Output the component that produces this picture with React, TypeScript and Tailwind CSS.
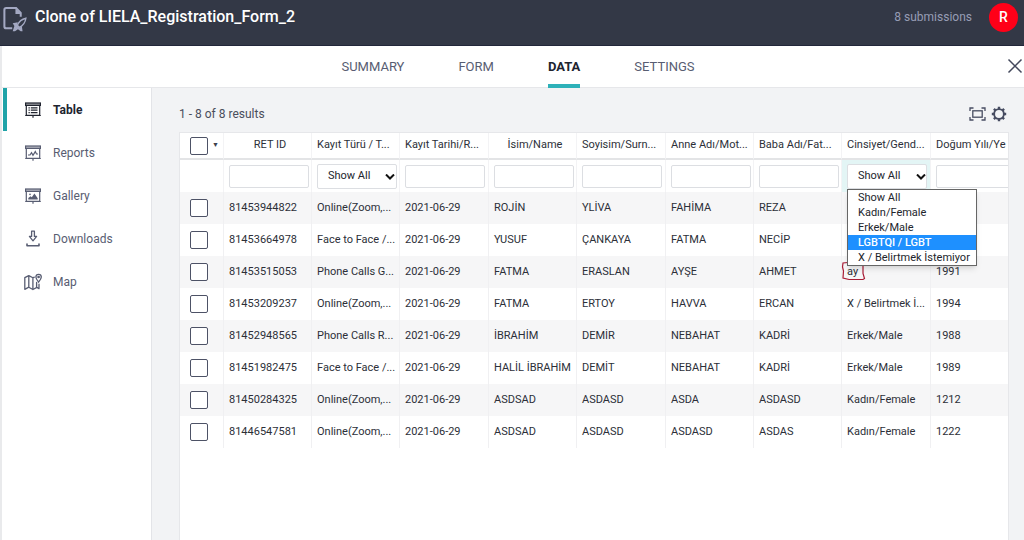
import type { ReactNode } from 'react'
import clsx from 'clsx'

const tabs = ['SUMMARY', 'FORM', 'DATA', 'SETTINGS']

const columns = [
  { title: 'RET ID', filter: 'text', width: 'w-[88px]', align: 'text-center' },
  { title: 'Kayıt Türü / T...', filter: 'select', width: 'w-[88px]', align: 'text-left' },
  { title: 'Kayıt Tarihi/R...', filter: 'text', width: 'w-[89px]', align: 'text-left' },
  { title: 'İsim/Name', filter: 'text', width: 'w-[88px]', align: 'text-center' },
  { title: 'Soyisim/Surn...', filter: 'text', width: 'w-[89px]', align: 'text-left' },
  { title: 'Anne Adı/Mot...', filter: 'text', width: 'w-[88px]', align: 'text-left' },
  { title: 'Baba Adı/Fat...', filter: 'text', width: 'w-[88px]', align: 'text-left' },
  { title: 'Cinsiyet/Gend...', filter: 'menu', width: 'w-[89px]', align: 'text-left' },
  { title: 'Doğum Yılı/Ye', filter: 'text', width: 'w-[88px]', align: 'text-left' },
]

const genders = ['Show All', 'Kadın/Female', 'Erkek/Male', 'LGBTQI / LGBT', 'X / Belirtmek İstemiyor']
const highlighted = 'LGBTQI / LGBT'

const rows = [
  ['81453944822', 'Online(Zoom,...', '2021-06-29', 'ROJİN', 'YLİVA', 'FAHİMA', 'REZA', '', ''],
  ['81453664978', 'Face to Face /...', '2021-06-29', 'YUSUF', 'ÇANKAYA', 'FATMA', 'NECİP', '', ''],
  ['81453515053', 'Phone Calls G...', '2021-06-29', 'FATMA', 'ERASLAN', 'AYŞE', 'AHMET', 'ay', '1991'],
  ['81453209237', 'Online(Zoom,...', '2021-06-29', 'FATMA', 'ERTOY', 'HAVVA', 'ERCAN', 'X / Belirtmek İ...', '1994'],
  ['81452948565', 'Phone Calls R...', '2021-06-29', 'İBRAHİM', 'DEMİR', 'NEBAHAT', 'KADRİ', 'Erkek/Male', '1988'],
  ['81451982475', 'Face to Face /...', '2021-06-29', 'HALİL İBRAHİM', 'DEMİT', 'NEBAHAT', 'KADRİ', 'Erkek/Male', '1989'],
  ['81450284325', 'Online(Zoom,...', '2021-06-29', 'ASDSAD', 'ASDASD', 'ASDA', 'ASDASD', 'Kadın/Female', '1212'],
  ['81446547581', 'Online(Zoom,...', '2021-06-29', 'ASDSAD', 'ASDASD', 'ASDASD', 'ASDAS', 'Kadın/Female', '1222'],
]

// presentation board shared by the Table, Reports and Gallery icons
function Board({ children }: { children: ReactNode }) {
  return (
    <svg viewBox="0 0 18 18" className="h-[18px] w-[18px]" fill="none" stroke="currentColor" strokeWidth="1.2">
      <rect x="1.6" y="2" width="14.8" height="2.4" fill="currentColor" fillOpacity="0.45" />
      <path d="M2.3 4.4v10h13.4v-10M1.2 14.5h15.6M9 14.5v2.3" />
      {children}
    </svg>
  )
}

const views = [
  {
    label: 'Table',
    icon: (
      <Board>
        <path d="M4.5 6.800h1.300M6.800 6.800h6.700M4.500 9.200h1.300M6.800 9.200h6.700M4.500 11.700h1.300M6.800 11.700h6.700" />
      </Board>
    ),
  },
  {
    label: 'Reports',
    icon: (
      <Board>
        <path d="M4 11h2l1.500-2.400L9 11.400l2.300-3.800 1.200 2.400H14" />
      </Board>
    ),
  },
  {
    label: 'Gallery',
    icon: (
      <Board>
        <path d="M4.300 12.600V11l2.200-1.800 1.300 1 2.600-3.600 3.300 4.600v1.400z" fill="currentColor" stroke="none" />
        <circle cx="6" cy="7.400" r="0.800" fill="currentColor" stroke="none" />
      </Board>
    ),
  },
  {
    label: 'Downloads',
    icon: (
      <svg viewBox="0 0 18 18" className="h-[18px] w-[18px]" fill="none" stroke="currentColor" strokeWidth="1.3" strokeLinejoin="round" strokeLinecap="round">
        <path d="M7.600 1.200h2.800v5.200h2.200L9 10.800 5.400 6.400h2.200z" />
        <path d="M3 14v1.800h12V14" strokeWidth="1.600" />
      </svg>
    ),
  },
  {
    label: 'Map',
    icon: (
      <svg viewBox="0 0 18 18" className="h-[18px] w-[18px]" fill="none" stroke="currentColor" strokeWidth="1.3" strokeLinejoin="round" strokeLinecap="round">
        <path d="M10.300 4.200 8.900 4.800 4.800 2.600.8 4.700v11.600l4-2.100 4.100 2.300 4-2.100 2.100 1.200v-4.400M4.800 2.600v11.600M8.900 4.800v11.700M12.600 9.400v5" />
        <path d="M14.600 9.200c-1.600-2-2.700-3.600-2.700-5.200a2.700 2.700 0 0 1 5.400 0c0 1.600-1.100 3.200-2.700 5.200z" />
        <circle cx="14.600" cy="4" r="0.700" />
      </svg>
    ),
  },
]

function FormLogo() {
  return (
    <svg viewBox="0 0 26 28" className="h-[26px] w-6 text-[#a3a8c2]" fill="none" stroke="currentColor" strokeWidth="2.2">
      <path d="M10 24H3.500Q1.500 24 1.500 22V4q0-2 2-2h10.700l5 5.500v4" />
      <path d="M13.500 2v6.500h6z" fill="currentColor" stroke="none" />
      <path d="M24.800 13.200c-3.800.9-7.500 3.500-9.300 7.600l2.300 2.200c4.200-1.900 6.400-5.600 7-9.800z" strokeWidth="1.500" />
      <path d="M16 17.500l-5.500 1.200 1.800 2.800-1.800 5.900h2.500l3.200-2.400 3 2.400h2l-.7-5 1.800-2.800-4.300 4-2.500-2.400z" fill="currentColor" stroke="none" />
    </svg>
  )
}

function Checkbox({ label }: { label: string }) {
  return (
    <input
      type="checkbox"
      aria-label={label}
      className="h-[18px] w-[18px] shrink-0 appearance-none rounded-xs border border-[#4d5266] bg-white"
    />
  )
}

function FilterSelect({ label }: { label: string }) {
  return (
    <div className="relative">
      <select
        aria-label={label}
        className="block h-[25px] w-20 appearance-none rounded-xs border border-[#dcdee2] bg-white pl-2.5 text-[11px] text-[#22252c]"
      >
        {genders.map(g => (
          <option key={g}>{g}</option>
        ))}
      </select>
      <svg viewBox="0 0 10 6" className="pointer-events-none absolute top-2.5 right-1 h-1.5 w-2.5" fill="none" stroke="#111" strokeWidth="2">
        <path d="M1 .5l4 4 4-4" />
      </svg>
    </div>
  )
}

function GenderMenu() {
  return (
    <ul
      role="listbox"
      aria-label="Cinsiyet/Gender"
      className="absolute top-full left-0 z-10 w-[130px] border border-[#666] bg-white text-left text-[11px] leading-[15px] font-normal text-[#22252c] shadow-md"
    >
      {genders.map(g => (
        <li
          key={g}
          role="option"
          aria-selected={g === highlighted}
          className={clsx('pl-2.5 whitespace-nowrap', g === highlighted && 'bg-[#1e90ff] font-medium text-white')}
        >
          {g}
        </li>
      ))}
    </ul>
  )
}

export default function App() {
  return (
    <div className="flex min-h-screen flex-col overflow-hidden bg-white font-['Roboto',sans-serif] text-[#2c3345]">
      <header className="flex justify-between border-b border-[#22273a] bg-[#333846] pr-1.5 pb-[11px] pl-[3px]">
        <div className="flex h-[34px] items-center gap-2">
          <div className="pt-1">
            <FormLogo />
          </div>
          <h1 className="text-base font-medium text-white">Clone of LIELA_Registration_Form_2</h1>
        </div>
        <div className="flex h-[34px] items-center gap-[17px]">
          <span className="text-xs text-[#979db5]">8 submissions</span>
          <button className="h-[29px] w-[29px] rounded-full bg-[#ff0018] text-sm font-medium text-white">R</button>
        </div>
      </header>

      <div className="flex flex-1 flex-col border-l-2 border-[#e9eaec]">
        <nav className="relative flex h-[42px] justify-center gap-[54px] border-b border-[#e6e7ea] pl-2.5 text-[13px]">
          {tabs.map(tab => (
            <a
              key={tab}
              href="#"
              className={clsx(
                'flex h-[42px] items-center border-b-4 pt-1',
                tab === 'DATA' ? 'border-[#2eb1b9] font-bold text-[#20242f]' : 'border-transparent text-[#585d72]',
              )}
            >
              {tab}
            </a>
          ))}
          <button aria-label="Close" className="absolute top-3 right-px text-[#43485c]">
            <svg viewBox="0 0 16 16" className="h-4 w-4" fill="none" stroke="currentColor" strokeWidth="1.5">
              <path d="M1.500 1.500l13 13M14.500 1.500l-13 13" />
            </svg>
          </button>
        </nav>

        <div className="flex flex-1">
          <aside className="w-[150px] shrink-0 border-r border-[#e3e4e8] pl-px">
            {views.map(({ label, icon }) => (
              <a
                key={label}
                href="#"
                className={clsx(
                  'flex h-[43px] items-center gap-[11px] border-l-4 pl-[17px] text-xs',
                  label === 'Table' ? 'border-[#1fa3a8] font-bold text-[#20242f]' : 'border-transparent text-[#585d72]',
                )}
              >
                {icon}
                {label}
              </a>
            ))}
          </aside>

          <main className="flex min-w-0 flex-1 flex-col bg-[#f2f3f5] pr-[15px] pl-[27px]">
            <div className="flex h-11 items-center justify-between pt-2">
              <p className="text-xs text-[#4a4e5c]">1 - 8 of 8 results</p>
              <div className="flex items-center gap-[5px] pr-0.5 text-[#474c61]">
                <button aria-label="Full screen">
                  <svg viewBox="0 0 17 14" className="h-3.5 w-[17px]" fill="none" stroke="currentColor" strokeWidth="1.3">
                    <path d="M1 4V1h3.500M12.500 1H16v3M16 10v3h-3.500M4.500 13H1v-3" />
                    <rect x="3.800" y="3.800" width="9.400" height="6.400" />
                  </svg>
                </button>
                <button aria-label="Settings">
                  <svg viewBox="0 0 16 16" className="h-4 w-4" fill="none" stroke="currentColor">
                    <circle cx="8" cy="8" r="4.900" strokeWidth="1.900" />
                    <path
                      d="M8 .8V3M8 13v2.200M.8 8H3M13 8h2.200M2.900 2.900l1.600 1.600M11.500 11.500l1.600 1.600M13.100 2.900l-1.600 1.600M4.500 11.500l-1.600 1.600"
                      strokeWidth="2.400"
                    />
                  </svg>
                </button>
              </div>
            </div>

            <div className="flex-1 overflow-hidden border border-b-0 border-[#e6e7ea] bg-white">
              <table className="w-[839px] table-fixed border-separate border-spacing-0 text-[11px] text-[#2c2f38]">
                <colgroup>
                  <col className="w-11" />
                  {columns.map(c => (
                    <col key={c.title} className={c.width} />
                  ))}
                </colgroup>
                <thead>
                  <tr className="h-[27px]">
                    <th className="border-r border-b-2 border-r-[#f3f3f5] border-b-[#e3e4e6] p-0 pl-2.5">
                      <div className="flex items-center gap-1">
                        <Checkbox label="Select all" />
                        <button aria-label="Selection options" className="text-[7px] text-[#3c404d]">▼</button>
                      </div>
                    </th>
                    {columns.map(c => (
                      <th
                        key={c.title}
                        className={clsx(
                          'border-r border-b-2 border-r-[#f3f3f5] border-b-[#e3e4e6] p-0 pl-[5px] font-normal whitespace-nowrap',
                          c.align,
                        )}
                      >
                        {c.title}
                      </th>
                    ))}
                  </tr>
                  <tr className="h-8">
                    <th className="border-r border-[#f3f3f5] p-0" />
                    {columns.map(c => (
                      <th
                        key={c.title}
                        className={clsx('border-r border-[#f3f3f5] p-0 pl-[5px] font-normal', c.filter === 'menu' && 'bg-[#e3f5f5]')}
                      >
                        {c.filter === 'text' && (
                          <input
                            type="text"
                            aria-label={c.title}
                            className="block h-[23px] w-20 rounded-xs border border-[#dcdee2] bg-white px-1.5"
                          />
                        )}
                        {c.filter === 'select' && <FilterSelect label={c.title} />}
                        {c.filter === 'menu' && (
                          <div className="relative">
                            <FilterSelect label={c.title} />
                            <GenderMenu />
                          </div>
                        )}
                      </th>
                    ))}
                  </tr>
                </thead>
                <tbody>
                  {rows.map(row => (
                    <tr key={row[0]} className="h-8 odd:bg-[#f6f6f7]">
                      <td className="border-r border-[#f0f0f2] p-0 pl-2.5">
                        <div className="flex">
                          <Checkbox label={`Select ${row[0]}`} />
                        </div>
                      </td>
                      {row.map((value, i) => (
                        <td key={i} className="border-r border-[#f0f0f2] p-0 pl-[5px] whitespace-nowrap">
                          {value === 'ay' ? (
                            <span className="relative">
                              ay
                              <svg viewBox="0 0 26 20" className="absolute -top-1 -left-1.5 h-5 w-[26px] max-w-none" fill="none" stroke="#a81c35" strokeWidth="1.2">
                                <path d="M7 1.500 2 2l-.5 4 1 4-.5 7 6 1.500h14l1.500-1-1.500-5V2.500L17 1.500l-9 1" />
                              </svg>
                            </span>
                          ) : (
                            value
                          )}
                        </td>
                      ))}
                    </tr>
                  ))}
                </tbody>
              </table>
            </div>
          </main>
        </div>
      </div>
    </div>
  )
}
